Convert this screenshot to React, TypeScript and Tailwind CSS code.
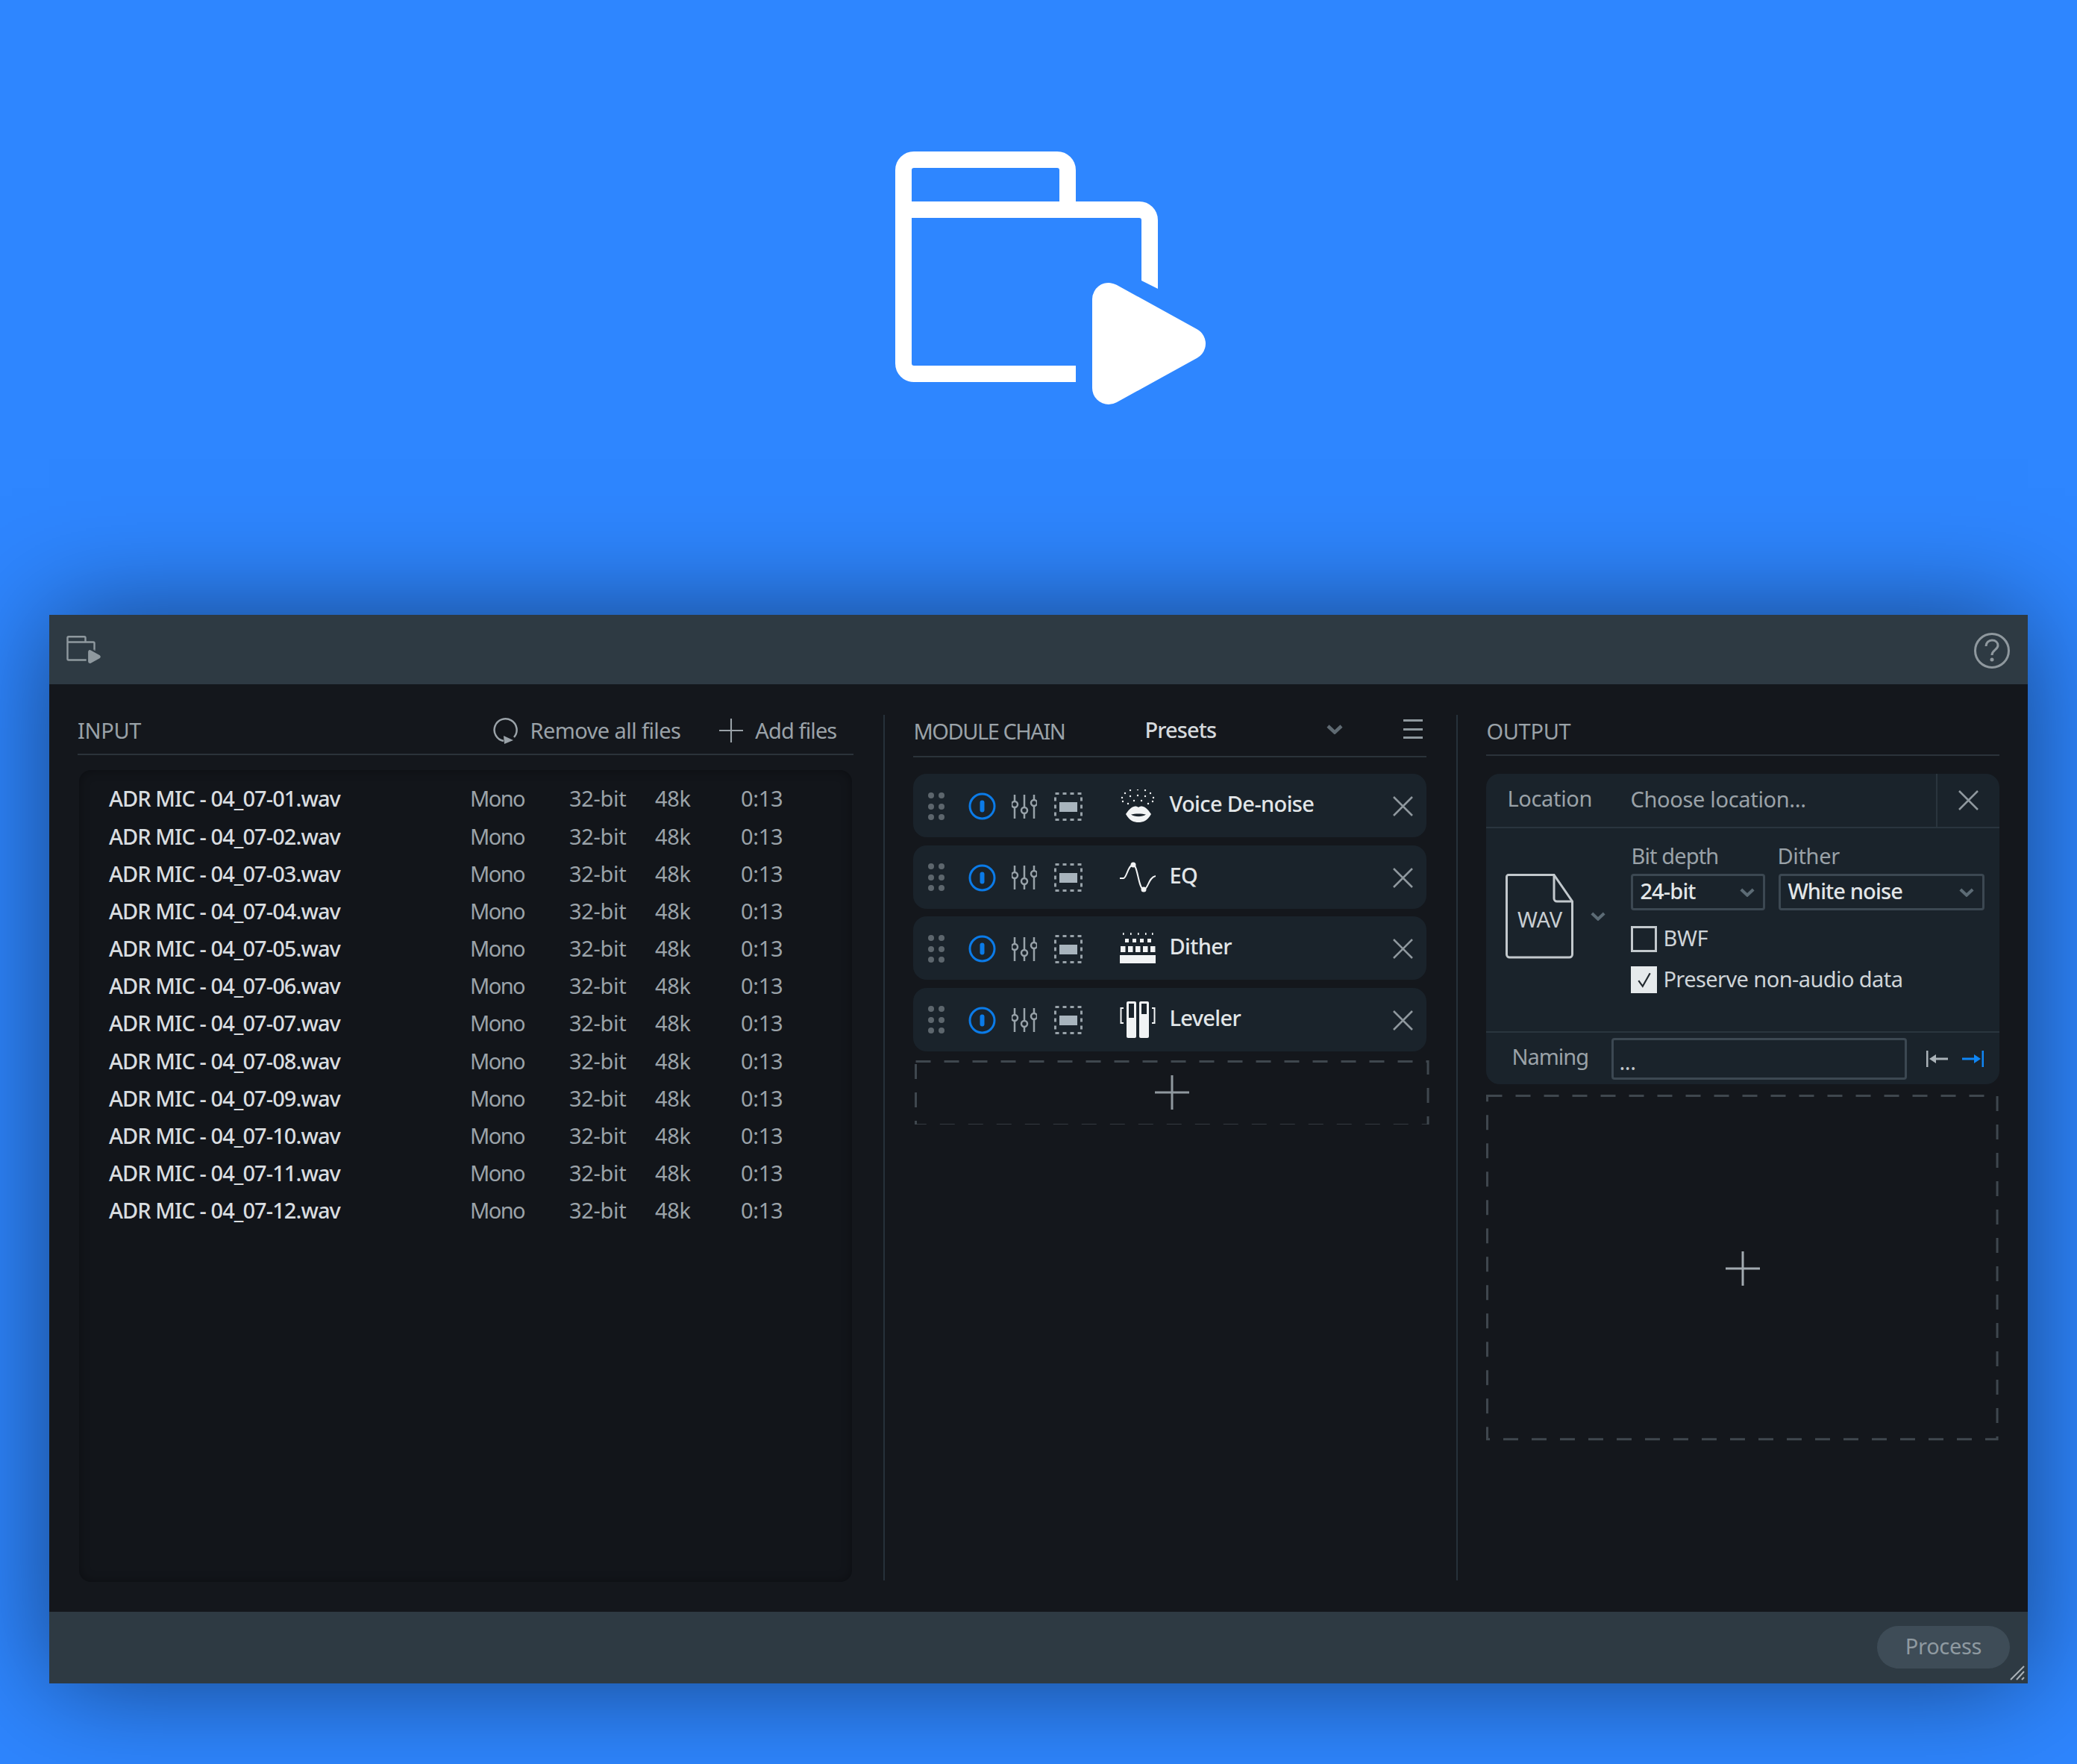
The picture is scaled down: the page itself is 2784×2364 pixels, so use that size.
import { ReactNode } from 'react';

const files = Array.from({ length: 12 }, (_, i) => `ADR MIC - 04_07-${String(i + 1).padStart(2, '0')}.wav`);

const FolderPlay = ({ className }: { className: string }) => (
  <svg viewBox="0 0 416 339" className={className} fill="none" stroke="currentColor" strokeWidth="22">
    <path d="M242 298H25a14 14 0 0 1-14-14V25a14 14 0 0 1 14-14H217a14 14 0 0 1 14 14V78" />
    <path d="M11 78H327a14 14 0 0 1 14 14V170" />
    <polygon points="330,170 352,170 352,184 330,173" fill="currentColor" stroke="none" />
    <polygon points="286,198 286,317 394,257.5" fill="currentColor" stroke="currentColor" strokeWidth="44" strokeLinejoin="round" />
  </svg>
);

const Plus = ({ className }: { className: string }) => (
  <svg viewBox="0 0 46 46" className={className} stroke="currentColor" strokeWidth="3">
    <path d="M23 0V46M0 23H46" />
  </svg>
);

const Cross = ({ className }: { className: string }) => (
  <svg viewBox="0 0 27 27" className={className} fill="none" stroke="currentColor" strokeWidth="2.5">
    <path d="M1 1L26 26M26 1L1 26" />
  </svg>
);

const Chevron = ({ className }: { className: string }) => (
  <svg viewBox="0 0 22 13" className={className} fill="none" stroke="currentColor" strokeWidth="4.5">
    <path d="M2 2L11 10.5L20 2" />
  </svg>
);

const DashedBox = ({ className, children }: { className: string; children: ReactNode }) => (
  <div className={`relative flex items-center justify-center ${className}`}>
    <svg className="absolute inset-0 h-full w-full text-[#3f474e]" fill="none">
      <rect x="1.5" y="1.5" width="99.5%" height="99%" stroke="currentColor" strokeWidth="3" strokeDasharray="20 18" />
    </svg>
    {children}
  </div>
);

const Grip = () => (
  <svg viewBox="0 0 22 38" className="h-[38px] w-[22px] text-[#5d666d]" fill="currentColor">
    {[4, 18].map(x => [4, 19, 33].map(y => <circle key={`${x}-${y}`} cx={x} cy={y} r="4" />))}
  </svg>
);

const Power = () => (
  <svg viewBox="0 0 37 37" className="h-[37px] w-[37px] text-[#0b7be8]" fill="none" stroke="currentColor" strokeWidth="3">
    <circle cx="18.5" cy="18.5" r="16.5" />
    <rect x="15.5" y="10.5" width="6" height="16" rx="3" fill="currentColor" stroke="none" />
  </svg>
);

const Sliders = () => (
  <svg viewBox="0 0 34 32" className="h-[32px] w-[34px] text-[#98a2a9]" fill="none" stroke="currentColor" strokeWidth="2.5">
    <path d="M4 0V32M17 0V32M30 0V32" />
    <circle cx="4" cy="13" r="4" fill="#1a232b" />
    <circle cx="17" cy="21" r="4" fill="#1a232b" />
    <circle cx="30" cy="11" r="4" fill="#1a232b" />
  </svg>
);

const SideChain = () => (
  <svg viewBox="0 0 38 38" className="h-[38px] w-[38px] text-[#98a2a9]" fill="none" stroke="currentColor">
    <rect x="1.5" y="1.5" width="35" height="35" strokeWidth="3" strokeDasharray="5 5" />
    <rect x="7" y="13" width="24" height="13" fill="#a8b4bd" stroke="none" />
  </svg>
);

const LipsIcon = () => (
  <svg viewBox="0 0 48 44" className="h-[44px] w-[48px] text-[#f1f3f4]" fill="currentColor">
    {[[3, 11], [7, 5], [14, 1], [24, 0], [34, 1], [41, 5], [45, 11], [4, 16], [14, 9], [24, 8], [34, 9], [44, 16], [19, 15], [29, 15], [11, 19], [38, 19]].map(([x, y]) => (
      <circle key={`${x}-${y}`} cx={x} cy={y} r="1.2" />
    ))}
    <path d="M8 33C14 24 20 20 25 24C30 20 36 24 42 33C37 42 31 44 25 44C19 44 13 42 8 33Z" />
    <path d="M15 33.5C20 32 30 32 35 33.5C30 37 20 37 15 33.5Z" fill="#1a232b" />
  </svg>
);

const EqIcon = () => (
  <svg viewBox="0 0 48 41" className="h-[41px] w-[48px] text-[#f1f3f4]" fill="none" stroke="currentColor" strokeWidth="2">
    <path d="M0 22H5C9 22 11 4 18 4C24 4 25 37 32 37C38 37 38 21 48 19" />
    <circle cx="18" cy="4" r="3.5" fill="currentColor" stroke="none" />
    <circle cx="32" cy="37" r="3.5" fill="currentColor" stroke="none" />
  </svg>
);

const DitherIcon = () => (
  <svg viewBox="0 0 48 41" className="h-[41px] w-[48px] text-[#f1f3f4]" fill="currentColor">
    {[4, 14, 24, 34, 43].map(x => <rect key={`a${x}`} x={x} y="0" width="1.6" height="3" />)}
    {[7, 17, 27, 37].map(x => <rect key={`b${x}`} x={x} y="8" width="5" height="5" />)}
    {[1, 11, 21, 31, 41].map(x => <rect key={`c${x}`} x={x} y="18" width="6.5" height="8" />)}
    <rect x="0" y="30" width="48" height="11" />
  </svg>
);

const LevelerIcon = () => (
  <svg viewBox="0 0 48 49" className="h-[49px] w-[48px] text-[#f1f3f4]" fill="none" stroke="currentColor" strokeWidth="2">
    <path d="M5 9H1.5V29H5M43 9H46.5V29H43" />
    <rect x="9" y="0" width="13" height="49" rx="2" fill="currentColor" stroke="none" />
    <rect x="26" y="0" width="13" height="49" rx="2" fill="currentColor" stroke="none" />
    <rect x="12" y="3" width="7" height="19" fill="#1a232b" stroke="none" />
    <rect x="29" y="3" width="7" height="14" fill="#1a232b" stroke="none" />
  </svg>
);

const modules = [
  { name: 'Voice De-noise', icon: <LipsIcon /> },
  { name: 'EQ', icon: <EqIcon /> },
  { name: 'Dither', icon: <DitherIcon /> },
  { name: 'Leveler', icon: <LevelerIcon /> },
];

const ModuleRow = ({ name, icon }: { name: string; icon: ReactNode }) => (
  <div className="flex h-[85px] items-center rounded-[18px] bg-[#1a232b] pl-[20px] pr-[18px]">
    <div className="mt-[2px] flex items-center">
      <Grip />
      <div className="ml-[32px]"><Power /></div>
      <div className="ml-[21px]"><Sliders /></div>
      <div className="ml-[23px]"><SideChain /></div>
    </div>
    <div className="ml-[50px] flex w-[48px] items-center justify-center">{icon}</div>
    <span className="mb-[5px] ml-[18px] text-[29px] font-medium tracking-[-0.022em] text-[#e2e6e8]">{name}</span>
    <div className="flex-1" />
    <Cross className="mt-[2px] h-[27px] w-[27px] text-[#8f989e]" />
  </div>
);

const Select = ({ value, width }: { value: string; width: string }) => (
  <div className={`flex h-[49px] items-center justify-between rounded-[4px] border-[3px] border-[#3c4852] pl-[9px] pr-[11px] text-[29px] font-medium tracking-[-0.03em] text-[#e2e6e8] ${width}`}>
    <span className="mb-[3px]">{value}</span>
    <Chevron className="h-[12px] w-[20px] text-[#5c6b75]" />
  </div>
);

export default function App() {
  return (
    <div className="h-[2364px] w-[2784px] overflow-hidden bg-[#2e86ff] font-['Noto_Sans','Liberation_Sans',sans-serif] tracking-[-0.02em]">
      <div className="flex h-[824px] justify-center pt-[203px]">
        <FolderPlay className="ml-[32px] h-[339px] w-[416px] text-white" />
      </div>

      <div className="mx-[66px] flex h-[1432px] flex-col bg-[#14171c] shadow-[0_0_140px_rgba(0,0,0,0.5)]">
        <div className="flex h-[93px] items-center justify-between bg-[#2e3a43] pl-[23px] pr-[24px]">
          <FolderPlay className="h-[37px] w-[46px] text-[#8f999f]" />
          <svg viewBox="0 0 48 48" className="mt-[3px] h-[48px] w-[48px] text-[#8f989e]" fill="none" stroke="currentColor" strokeWidth="3">
            <circle cx="24" cy="24" r="22.5" />
            <path d="M16 18C16 13 20 10 24 10C29 10 32 13 32 17C32 23 24 23 24 30" />
            <circle cx="24" cy="36" r="2.5" fill="currentColor" stroke="none" />
          </svg>
        </div>

        <div className="flex h-[1243px] px-[38px] pt-[41px] pb-[40px]">
          <section className="flex w-[1041px] flex-col">
            <header className="flex h-[54px] items-center border-b-2 border-[#2b333a] pb-[10px] text-[29px] text-[#9aa2a8]">
              <span>INPUT</span>
              <div className="flex-1" />
              <svg viewBox="0 0 34 36" className="h-[36px] w-[34px]" fill="none" stroke="currentColor" strokeWidth="2.5">
                <path d="M28 27A15 15 0 1 0 14 32" />
                <polygon points="14,25 27,31 15,36" fill="currentColor" stroke="none" />
              </svg>
              <span className="ml-[16px] tracking-[-0.02em]">Remove all files</span>
              <Plus className="ml-[52px] h-[32px] w-[32px]" />
              <span className="ml-[16px] mr-[23px] tracking-[-0.03em]">Add files</span>
            </header>
            <div className="mx-[2px] mt-[20px] flex-1 rounded-[16px] bg-[#12151a] pt-[13px] pl-[40px] shadow-[inset_0_0_14px_rgba(0,0,0,0.35)]">
              {files.map(file => (
                <div key={file} className="flex h-[50.2px] items-center text-[29px] text-[#9ba3a9]">
                  <span className="w-[484px] font-medium tracking-[-0.032em] text-[#d9dde0]">{file}</span>
                  <span className="w-[133px] tracking-[-0.055em]">Mono</span>
                  <span className="w-[115px]">32-bit</span>
                  <span className="w-[115px]">48k</span>
                  <span>0:13</span>
                </div>
              ))}
            </div>
          </section>

          <div className="mb-[2px] ml-[40px] w-[2px] bg-[#26313a]" />

          <section className="ml-[38px] flex w-[688px] flex-col">
            <header className="flex h-[57px] items-center border-b-2 border-[#2b333a] pb-[17px] text-[29px] text-[#9aa2a8]">
              <span className="mt-[6px] w-[310px] tracking-[-0.05em]">MODULE CHAIN</span>
              <span className="mt-[2px] font-medium tracking-[-0.03em] text-[#d5d9dc]">Presets</span>
              <div className="flex-1" />
              <Chevron className="h-[13px] w-[22px] text-[#5f6a72]" />
              <div className="ml-[81px] mr-[5px] flex h-[26px] w-[26px] flex-col justify-between">
                <div className="h-[3px] bg-[#8f989e]" />
                <div className="h-[3px] bg-[#8f989e]" />
                <div className="h-[3px] bg-[#8f989e]" />
              </div>
            </header>
            <div className="mt-[22px] flex flex-col gap-[10.6px]">
              {modules.map(m => <ModuleRow key={m.name} name={m.name} icon={m.icon} />)}
            </div>
            <DashedBox className="ml-[2px] mt-[12px] h-[86px] w-[690px]">
              <Plus className="h-[46px] w-[46px] text-[#8f989e]" />
            </DashedBox>
          </section>

          <div className="mb-[2px] ml-[40px] w-[2px] bg-[#26313a]" />

          <section className="ml-[38px] flex w-[688px] flex-col">
            <header className="flex h-[55px] items-center border-b-2 border-[#2b333a] pb-[13px] pt-[4px] text-[29px] text-[#9aa2a8]">
              OUTPUT
            </header>
            <div className="mt-[24px] flex h-[416px] flex-col rounded-[18px] bg-[#1a232b] text-[29px] text-[#9aa2a8]">
              <div className="flex h-[73px] items-center border-b-2 border-[#2a353e]">
                <span className="mb-[5px] ml-[28px] w-[165px]">Location</span>
                <span className="mb-[3px]">Choose location...</span>
                <div className="flex-1" />
                <div className="flex h-full w-[85px] items-center border-l-2 border-[#2a353e] pl-[28px]">
                  <Cross className="h-[27px] w-[27px] text-[#8f989e]" />
                </div>
              </div>

              <div className="flex flex-1 items-start">
                <div className="ml-[26px] mt-[61px] flex w-[168px] items-center">
                  <div className="relative flex h-[114px] w-[91px] items-center justify-center pt-[7px] text-[29px] text-[#c8ced2]">
                    <svg viewBox="0 0 91 114" className="absolute inset-0 h-full w-full" fill="none" stroke="#c3c9cd" strokeWidth="3">
                      <path d="M4 1.5H65L89.5 37V108a4 4 0 0 1-4 4H5.5a4 4 0 0 1-4-4V4a2.5 2.5 0 0 1 2.5-2.5Z" />
                      <path d="M65 1.5V33a4 4 0 0 0 4 4H89.5" />
                    </svg>
                    <span className="relative">WAV</span>
                  </div>
                  <Chevron className="ml-[23px] h-[12px] w-[20px] text-[#5c6b75]" />
                </div>
                <div className="pt-[22px]">
                  <div className="flex">
                    <div className="w-[198px]">
                      <div className="mb-[9px] h-[30px] leading-[30px] tracking-[-0.03em]">Bit depth</div>
                      <Select value="24-bit" width="w-[180px]" />
                    </div>
                    <div>
                      <div className="-ml-[2px] mb-[9px] h-[30px] leading-[30px]">Dither</div>
                      <Select value="White noise" width="w-[276px]" />
                    </div>
                  </div>
                  <div className="mt-[21px] flex h-[35px] items-center gap-[8px] text-[#cfd4d8]">
                    <div className="h-[35px] w-[35px] border-[3px] border-[#c3c9cd]" />
                    <span className="mb-[3px]">BWF</span>
                  </div>
                  <div className="mt-[19px] flex h-[36px] items-center gap-[8px] text-[#cfd4d8]">
                    <div className="flex h-[36px] w-[35px] items-center justify-center bg-[#e6eaec]">
                      <svg viewBox="0 0 20 20" className="h-[22px] w-[22px] text-[#22292f]" fill="none" stroke="currentColor" strokeWidth="2">
                        <path d="M3 11L8 18L17 2" />
                      </svg>
                    </div>
                    <span className="mb-[3px] tracking-[-0.02em]">Preserve non-audio data</span>
                  </div>
                </div>
              </div>

              <div className="flex h-[71px] items-start border-t-2 border-[#2a353e] pt-[7px]">
                <span className="ml-[34px] mt-[3px] w-[134px] tracking-[-0.035em]">Naming</span>
                <div className="flex h-[56px] w-[396px] items-end rounded-[4px] border-[3px] border-[#3c4852] pb-[7px] pl-[7px] text-[29px] leading-none text-[#c3c9cd]">...</div>
                <div className="ml-[26px] mt-[17px] flex items-center gap-[19px]">
                  <svg viewBox="0 0 29 22" className="h-[22px] w-[29px] text-[#aab2b8]" fill="currentColor">
                    <rect x="0" y="0" width="2.5" height="22" />
                    <polygon points="4,11 13,5 13,17" />
                    <rect x="12" y="9.5" width="17" height="3" />
                  </svg>
                  <svg viewBox="0 0 29 22" className="h-[22px] w-[29px] text-[#0f86f5]" fill="currentColor">
                    <rect x="26.5" y="0" width="2.5" height="22" />
                    <polygon points="25,11 16,5 16,17" />
                    <rect x="0" y="9.5" width="17" height="3" />
                  </svg>
                </div>
              </div>
            </div>
            <DashedBox className="mt-[14px] h-[465px] w-[687px]">
              <Plus className="h-[46px] w-[46px] text-[#a2aab0]" />
            </DashedBox>
          </section>
        </div>

        <div className="relative flex h-[96px] items-start justify-end bg-[#2e3a43] pt-[19px] pr-[24px]">
          <div className="flex h-[57px] w-[178px] items-center justify-center rounded-full bg-[#3e4c57] pb-[4px] text-[29px] text-[#8f9aa1]">
            Process
          </div>
          <svg viewBox="0 0 20 20" className="absolute bottom-[4px] right-[4px] h-[20px] w-[20px] text-[#aab2b8]" fill="none" stroke="currentColor" strokeWidth="2">
            <path d="M1 19L19 1M9 19L19 8M16 19L19 16" />
          </svg>
        </div>
      </div>
    </div>
  );
}
